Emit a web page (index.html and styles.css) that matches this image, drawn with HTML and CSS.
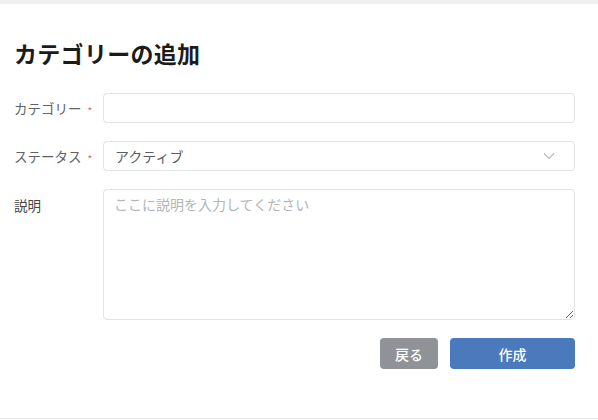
FILE: index.html
```html
<!DOCTYPE html>
<html lang="ja">
<head>
<meta charset="utf-8">
<link rel="stylesheet" href="styles.css">
</head>
<body>
<div class="topbar"></div>
<main class="page">
  <h1 class="title">カテゴリーの追加</h1>
  <form class="form">
    <div class="row">
      <label class="label">カテゴリー<span class="req">*</span></label>
      <input class="control" type="text">
    </div>
    <div class="row">
      <label class="label">ステータス<span class="req">*</span></label>
      <div class="control select">
        <span>アクティブ</span>
        <svg class="chev" width="12" height="8" viewBox="0 0 12 8"><path d="M1 1.5 L6 6.5 L11 1.5" fill="none" stroke="#b4b8bf" stroke-width="1.1"/></svg>
      </div>
    </div>
    <div class="row row-top">
      <label class="label label-top">説明</label>
      <textarea class="control area" placeholder="ここに説明を入力してください"></textarea>
    </div>
    <div class="actions">
      <button type="button" class="btn btn-back">戻る</button>
      <button type="button" class="btn btn-create">作成</button>
    </div>
  </form>
</main>
<div class="bottomline"></div>
</body>
</html>
```
FILE: styles.css
```css
* { box-sizing: border-box; }
html, body {
  margin: 0;
  background: #fff;
  font-family: "Noto Sans CJK JP", "Noto Sans", sans-serif;
}
body {
  width: 598px;
  height: 420px;
  position: relative;
  overflow: hidden;
}
.topbar {
  height: 4px;
  background: #efefef;
}
.page {
  padding: 0 23px 0 14px;
}
.title {
  margin: 0;
  padding-top: 33px;
  font-size: 23px;
  line-height: 32px;
  font-weight: 700;
  color: #1b1b1b;
  letter-spacing: 0.3px;
}
.form {
  margin-top: 24px;
  display: flex;
  flex-direction: column;
  gap: 18px;
}
.row {
  display: flex;
  align-items: center;
}
.row-top { align-items: flex-start; }
.label {
  width: 89px;
  flex: none;
  font-size: 13.5px;
  color: #5f6266;
  display: flex;
  align-items: center;
}
.label-top {
  padding-top: 6px;
  color: #444;
}
.req {
  color: #e0605e;
  font-size: 10px;
  margin-left: 6px;
  margin-top: 6px;
  line-height: 14px;
}
.control {
  flex: 1;
  height: 30px;
  border: 1px solid #e1e3e7;
  border-radius: 4px;
  background: #fff;
  font-family: inherit;
  font-size: 14px;
  color: #555;
  outline: none;
  padding: 0 12px 0 11px;
}
.select {
  display: flex;
  align-items: center;
  justify-content: space-between;
  color: #5a5d61;
}
.chev { margin-right: 7px; }
.area {
  height: 131px;
  padding: 4px 12px 6px 10px;
  resize: both;
  line-height: 20px;
}
.area::placeholder { color: #b3b5b9; }
.actions {
  display: flex;
  justify-content: flex-end;
  gap: 12px;
}
.btn {
  height: 31px;
  border: none;
  border-radius: 4px;
  color: #fff;
  font-family: inherit;
  font-size: 14px;
  font-weight: 500;
  padding: 0;
}
.btn-back {
  width: 58px;
  background: #8f9397;
}
.btn-create {
  width: 125px;
  background: #4a79bc;
}
.bottomline {
  position: absolute;
  left: 0;
  right: 0;
  bottom: 1px;
  height: 1px;
  background: #e6e6e6;
}
```
